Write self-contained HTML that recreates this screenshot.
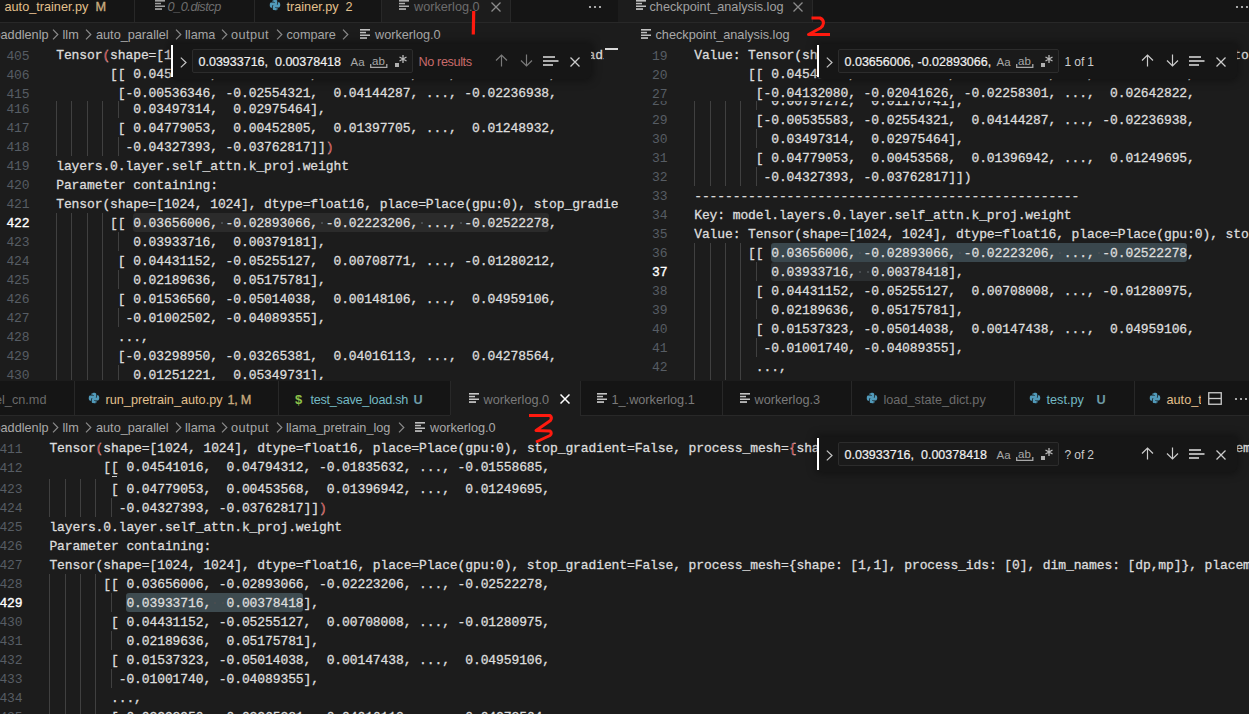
<!DOCTYPE html><html><head><meta charset="utf-8"><style>html,body{margin:0;padding:0;width:1249px;height:714px;overflow:hidden;background:#1c1c1c}.ln{position:absolute;text-align:right;width:40px;white-space:pre;font-family:'Liberation Mono',monospace;font-size:13px;letter-spacing:-0.1px;line-height:19px;color:#575d64}.tx{position:absolute;white-space:pre;font-family:'Liberation Mono',monospace;font-size:13px;letter-spacing:-0.1px;line-height:19px;color:#dcdcdc;-webkit-text-stroke:0.3px #dcdcdc}.r{color:#d21b1b}.g{position:absolute;width:1px;background:#404040}.tab{position:absolute;white-space:pre;font-family:'Liberation Sans',sans-serif;font-size:12.7px;line-height:16px}.bc{position:absolute;white-space:pre;font-family:'Liberation Sans',sans-serif;font-size:12.7px;line-height:16px;color:#a9a9a9}</style></head><body>
<div style="position:absolute;left:0px;top:-12px;width:618px;height:35px;background:#151515"></div>
<div style="position:absolute;left:0px;top:22px;width:618px;height:1px;background:#282828"></div>
<div style="position:absolute;left:381px;top:-12px;width:129px;height:34px;background:#1c1c1c"></div>
<div style="position:absolute;left:134px;top:-12px;width:1px;height:34px;background:#282828"></div>
<div style="position:absolute;left:254px;top:-12px;width:1px;height:34px;background:#282828"></div>
<div style="position:absolute;left:381px;top:-12px;width:1px;height:34px;background:#282828"></div>
<div style="position:absolute;left:510px;top:-12px;width:1px;height:34px;background:#282828"></div>
<div class="tab" style="left:4.5px;top:-1.4px;color:#e2c08d;">auto_trainer.py</div>
<div class="tab" style="left:95.5px;top:-1.4px;color:#c9ab7e;-webkit-text-stroke:0.35px #c9ab7e">M</div>
<svg style="position:absolute;left:154.5px;top:-0.5px" width="10" height="10" viewBox="0 0 10 10"><rect x="0" y="0" width="10" height="1.6" fill="#a0a0a0"/><rect x="0" y="2.8" width="6" height="1.5" fill="#a0a0a0"/><rect x="0" y="5.5" width="10" height="1.5" fill="#a0a0a0"/><rect x="0" y="8.2" width="7" height="1.7" fill="#a0a0a0"/></svg>
<div class="tab" style="left:167.5px;top:-1.4px;color:#6e6e6e;font-style:italic;letter-spacing:-0.45px">0_0.distcp</div>
<svg style="position:absolute;left:269px;top:-1px" width="12" height="12" viewBox="0 0 16 16"><path fill="#519aba" d="M7.9 1C4.6 1 4.7 2.5 4.7 2.5V4.1h3.3v.6H3.2S1 4.4 1 8s1.9 3.6 1.9 3.6h1.2V9.9s-.1-1.9 1.9-1.9h3.2s1.8 0 1.8-1.8V2.9S11.3 1 7.9 1zM6.1 2.1a.6.6 0 110 1.2.6.6 0 010-1.2z"/><path fill="#519aba" d="M8.1 15c3.3 0 3.2-1.5 3.2-1.5v-1.6H8v-.6h4.8S15 11.6 15 8s-1.9-3.6-1.9-3.6h-1.2v1.7s.1 1.9-1.9 1.9H6.8S5 8 5 9.8v3.3S4.7 15 8.1 15zm1.8-1.1a.6.6 0 110-1.2.6.6 0 010 1.2z"/></svg>
<div class="tab" style="left:286.5px;top:-1.4px;color:#e2c08d;">trainer.py</div>
<div class="tab" style="left:345.5px;top:-1.4px;color:#e2c08d;">2</div>
<svg style="position:absolute;left:399px;top:-0.5px" width="10" height="10" viewBox="0 0 10 10"><rect x="0" y="0" width="10" height="1.6" fill="#b0b0b0"/><rect x="0" y="2.8" width="6" height="1.5" fill="#b0b0b0"/><rect x="0" y="5.5" width="10" height="1.5" fill="#b0b0b0"/><rect x="0" y="8.2" width="7" height="1.7" fill="#b0b0b0"/></svg>
<div class="tab" style="left:414px;top:-1.4px;color:#6c6c6c;">workerlog.0</div>
<svg style="position:absolute;left:491px;top:2px" width="10" height="10" viewBox="0 0 10 10"><path d="M0.5 0.5L9.5 9.5M9.5 0.5L0.5 9.5" stroke="#8b8b8b" stroke-width="1.3" fill="none"/></svg>
<svg style="position:absolute;left:588px;top:5px" width="14" height="4" viewBox="0 0 14 4"><circle cx="2" cy="2" r="1.1" fill="#cccccc"/><circle cx="7" cy="2" r="1.1" fill="#cccccc"/><circle cx="12" cy="2" r="1.1" fill="#cccccc"/></svg>
<div style="position:absolute;left:618px;top:-12px;width:631px;height:35px;background:#151515"></div>
<div style="position:absolute;left:618px;top:22px;width:631px;height:1px;background:#282828"></div>
<div style="position:absolute;left:618px;top:-12px;width:194px;height:34px;background:#1c1c1c"></div>
<div style="position:absolute;left:812px;top:-12px;width:1px;height:34px;background:#282828"></div>
<svg style="position:absolute;left:635.5px;top:-0.5px" width="10" height="10" viewBox="0 0 10 10"><rect x="0" y="0" width="10" height="1.6" fill="#c0c0c0"/><rect x="0" y="2.8" width="6" height="1.5" fill="#c0c0c0"/><rect x="0" y="5.5" width="10" height="1.5" fill="#c0c0c0"/><rect x="0" y="8.2" width="7" height="1.7" fill="#c0c0c0"/></svg>
<div class="tab" style="left:649.5px;top:-1.4px;color:#a0a0a0;">checkpoint_analysis.log</div>
<svg style="position:absolute;left:793px;top:2px" width="10" height="10" viewBox="0 0 10 10"><path d="M0.5 0.5L9.5 9.5M9.5 0.5L0.5 9.5" stroke="#8b8b8b" stroke-width="1.3" fill="none"/></svg>
<svg style="position:absolute;left:1235px;top:5px" width="14" height="4" viewBox="0 0 14 4"><circle cx="2" cy="2" r="1.1" fill="#cccccc"/><circle cx="7" cy="2" r="1.1" fill="#cccccc"/><circle cx="12" cy="2" r="1.1" fill="#cccccc"/></svg>
<div style="position:absolute;left:0px;top:381px;width:1249px;height:35px;background:#151515"></div>
<div style="position:absolute;left:0px;top:415px;width:1249px;height:1px;background:#282828"></div>
<div style="position:absolute;left:450px;top:381px;width:130px;height:35px;background:#1c1c1c"></div>
<div style="position:absolute;left:74px;top:381px;width:1px;height:34px;background:#282828"></div>
<div style="position:absolute;left:278px;top:381px;width:1px;height:34px;background:#282828"></div>
<div style="position:absolute;left:450px;top:381px;width:1px;height:34px;background:#282828"></div>
<div style="position:absolute;left:580px;top:381px;width:1px;height:34px;background:#282828"></div>
<div style="position:absolute;left:722px;top:381px;width:1px;height:34px;background:#282828"></div>
<div style="position:absolute;left:851px;top:381px;width:1px;height:34px;background:#282828"></div>
<div style="position:absolute;left:1014px;top:381px;width:1px;height:34px;background:#282828"></div>
<div style="position:absolute;left:1134px;top:381px;width:1px;height:34px;background:#282828"></div>
<div class="tab" style="left:-5px;top:391.6px;color:#6a6a6a;">el_cn.md</div>
<svg style="position:absolute;left:88px;top:392px" width="12" height="12" viewBox="0 0 16 16"><path fill="#519aba" d="M7.9 1C4.6 1 4.7 2.5 4.7 2.5V4.1h3.3v.6H3.2S1 4.4 1 8s1.9 3.6 1.9 3.6h1.2V9.9s-.1-1.9 1.9-1.9h3.2s1.8 0 1.8-1.8V2.9S11.3 1 7.9 1zM6.1 2.1a.6.6 0 110 1.2.6.6 0 010-1.2z"/><path fill="#519aba" d="M8.1 15c3.3 0 3.2-1.5 3.2-1.5v-1.6H8v-.6h4.8S15 11.6 15 8s-1.9-3.6-1.9-3.6h-1.2v1.7s.1 1.9-1.9 1.9H6.8S5 8 5 9.8v3.3S4.7 15 8.1 15zm1.8-1.1a.6.6 0 110-1.2.6.6 0 010 1.2z"/></svg>
<div class="tab" style="left:105.5px;top:391.6px;color:#e2c08d;">run_pretrain_auto.py</div>
<div class="tab" style="left:227.5px;top:391.6px;color:#c9ab7e;font-size:12.7px;letter-spacing:-0.3px;-webkit-text-stroke:0.3px #c9ab7e">1, M</div>
<div class="tab" style="left:295px;top:391.6px;color:#8dc149;font-weight:bold;font-size:13px">$</div>
<div class="tab" style="left:310.5px;top:391.6px;color:#73b9c4;letter-spacing:-0.28px">test_save_load.sh</div>
<div class="tab" style="left:413.5px;top:391.6px;color:#6e9aa6;font-weight:bold">U</div>
<svg style="position:absolute;left:469px;top:393px" width="10" height="10" viewBox="0 0 10 10"><rect x="0" y="0" width="10" height="1.6" fill="#c8c8c8"/><rect x="0" y="2.8" width="6" height="1.5" fill="#c8c8c8"/><rect x="0" y="5.5" width="10" height="1.5" fill="#c8c8c8"/><rect x="0" y="8.2" width="7" height="1.7" fill="#c8c8c8"/></svg>
<div class="tab" style="left:483.5px;top:391.6px;color:#7a7a7a;">workerlog.0</div>
<svg style="position:absolute;left:560px;top:394px" width="10" height="10" viewBox="0 0 10 10"><path d="M0.5 0.5L9.5 9.5M9.5 0.5L0.5 9.5" stroke="#ffffff" stroke-width="1.5" fill="none"/></svg>
<svg style="position:absolute;left:597px;top:393px" width="10" height="10" viewBox="0 0 10 10"><rect x="0" y="0" width="10" height="1.6" fill="#c5c5c5"/><rect x="0" y="2.8" width="6" height="1.5" fill="#c5c5c5"/><rect x="0" y="5.5" width="10" height="1.5" fill="#c5c5c5"/><rect x="0" y="8.2" width="7" height="1.7" fill="#c5c5c5"/></svg>
<div class="tab" style="left:611.5px;top:391.6px;color:#7a7a7a;">1_.workerlog.1</div>
<svg style="position:absolute;left:740px;top:393px" width="10" height="10" viewBox="0 0 10 10"><rect x="0" y="0" width="10" height="1.6" fill="#c5c5c5"/><rect x="0" y="2.8" width="6" height="1.5" fill="#c5c5c5"/><rect x="0" y="5.5" width="10" height="1.5" fill="#c5c5c5"/><rect x="0" y="8.2" width="7" height="1.7" fill="#c5c5c5"/></svg>
<div class="tab" style="left:754.5px;top:391.6px;color:#7a7a7a;">workerlog.3</div>
<svg style="position:absolute;left:866px;top:392px" width="12" height="12" viewBox="0 0 16 16"><path fill="#519aba" d="M7.9 1C4.6 1 4.7 2.5 4.7 2.5V4.1h3.3v.6H3.2S1 4.4 1 8s1.9 3.6 1.9 3.6h1.2V9.9s-.1-1.9 1.9-1.9h3.2s1.8 0 1.8-1.8V2.9S11.3 1 7.9 1zM6.1 2.1a.6.6 0 110 1.2.6.6 0 010-1.2z"/><path fill="#519aba" d="M8.1 15c3.3 0 3.2-1.5 3.2-1.5v-1.6H8v-.6h4.8S15 11.6 15 8s-1.9-3.6-1.9-3.6h-1.2v1.7s.1 1.9-1.9 1.9H6.8S5 8 5 9.8v3.3S4.7 15 8.1 15zm1.8-1.1a.6.6 0 110-1.2.6.6 0 010 1.2z"/></svg>
<div class="tab" style="left:883.5px;top:391.6px;color:#6c6c6c;">load_state_dict.py</div>
<svg style="position:absolute;left:1029px;top:392px" width="12" height="12" viewBox="0 0 16 16"><path fill="#519aba" d="M7.9 1C4.6 1 4.7 2.5 4.7 2.5V4.1h3.3v.6H3.2S1 4.4 1 8s1.9 3.6 1.9 3.6h1.2V9.9s-.1-1.9 1.9-1.9h3.2s1.8 0 1.8-1.8V2.9S11.3 1 7.9 1zM6.1 2.1a.6.6 0 110 1.2.6.6 0 010-1.2z"/><path fill="#519aba" d="M8.1 15c3.3 0 3.2-1.5 3.2-1.5v-1.6H8v-.6h4.8S15 11.6 15 8s-1.9-3.6-1.9-3.6h-1.2v1.7s.1 1.9-1.9 1.9H6.8S5 8 5 9.8v3.3S4.7 15 8.1 15zm1.8-1.1a.6.6 0 110-1.2.6.6 0 010 1.2z"/></svg>
<div class="tab" style="left:1046.5px;top:391.6px;color:#73b9c4;">test.py</div>
<div class="tab" style="left:1096.5px;top:391.6px;color:#6e9aa6;font-weight:bold">U</div>
<svg style="position:absolute;left:1149px;top:392px" width="12" height="12" viewBox="0 0 16 16"><path fill="#519aba" d="M7.9 1C4.6 1 4.7 2.5 4.7 2.5V4.1h3.3v.6H3.2S1 4.4 1 8s1.9 3.6 1.9 3.6h1.2V9.9s-.1-1.9 1.9-1.9h3.2s1.8 0 1.8-1.8V2.9S11.3 1 7.9 1zM6.1 2.1a.6.6 0 110 1.2.6.6 0 010-1.2z"/><path fill="#519aba" d="M8.1 15c3.3 0 3.2-1.5 3.2-1.5v-1.6H8v-.6h4.8S15 11.6 15 8s-1.9-3.6-1.9-3.6h-1.2v1.7s.1 1.9-1.9 1.9H6.8S5 8 5 9.8v3.3S4.7 15 8.1 15zm1.8-1.1a.6.6 0 110-1.2.6.6 0 010 1.2z"/></svg>
<div style="position:absolute;left:1166px;top:385px;width:35px;height:26px;overflow:hidden">
<div class="tab" style="left:0.5px;top:6.6px;color:#e2c08d">auto_trainer.py</div></div>
<svg style="position:absolute;left:1208px;top:392px" width="14" height="13" viewBox="0 0 14 13"><rect x="0.75" y="0.75" width="12.5" height="11.5" fill="none" stroke="#cccccc" stroke-width="1.3"/><line x1="1" y1="6.5" x2="13" y2="6.5" stroke="#cccccc" stroke-width="1.3"/></svg>
<svg style="position:absolute;left:1234px;top:397px" width="14" height="4" viewBox="0 0 14 4"><circle cx="2" cy="2" r="1.1" fill="#cccccc"/><circle cx="7" cy="2" r="1.1" fill="#cccccc"/><circle cx="12" cy="2" r="1.1" fill="#cccccc"/></svg>
<div class="bc" style="left:-6.5px;top:26.6px">paddlenlp</div>
<svg style="position:absolute;left:52px;top:28.5px" width="7" height="11" viewBox="0 0 7 11"><path d="M1 0.7L5.8 5.5L1 10.3" stroke="#8b8b8b" stroke-width="1.2" fill="none"/></svg>
<div class="bc" style="left:62.5px;top:26.6px">llm</div>
<svg style="position:absolute;left:85px;top:28.5px" width="7" height="11" viewBox="0 0 7 11"><path d="M1 0.7L5.8 5.5L1 10.3" stroke="#8b8b8b" stroke-width="1.2" fill="none"/></svg>
<div class="bc" style="left:96px;top:26.6px">auto_parallel</div>
<svg style="position:absolute;left:175px;top:28.5px" width="7" height="11" viewBox="0 0 7 11"><path d="M1 0.7L5.8 5.5L1 10.3" stroke="#8b8b8b" stroke-width="1.2" fill="none"/></svg>
<div class="bc" style="left:185px;top:26.6px">llama</div>
<svg style="position:absolute;left:221px;top:28.5px" width="7" height="11" viewBox="0 0 7 11"><path d="M1 0.7L5.8 5.5L1 10.3" stroke="#8b8b8b" stroke-width="1.2" fill="none"/></svg>
<div class="bc" style="left:231px;top:26.6px;letter-spacing:0.45px">output</div>
<svg style="position:absolute;left:276px;top:28.5px" width="7" height="11" viewBox="0 0 7 11"><path d="M1 0.7L5.8 5.5L1 10.3" stroke="#8b8b8b" stroke-width="1.2" fill="none"/></svg>
<div class="bc" style="left:286.5px;top:26.6px">compare</div>
<svg style="position:absolute;left:342px;top:28.5px" width="7" height="11" viewBox="0 0 7 11"><path d="M1 0.7L5.8 5.5L1 10.3" stroke="#8b8b8b" stroke-width="1.2" fill="none"/></svg>
<svg style="position:absolute;left:360px;top:29px" width="10" height="10" viewBox="0 0 10 10"><rect x="0" y="0" width="10" height="1.6" fill="#c0c0c0"/><rect x="0" y="2.8" width="6" height="1.5" fill="#c0c0c0"/><rect x="0" y="5.5" width="10" height="1.5" fill="#c0c0c0"/><rect x="0" y="8.2" width="7" height="1.7" fill="#c0c0c0"/></svg>
<div class="bc" style="left:375px;top:26.6px">workerlog.0</div>
<svg style="position:absolute;left:641px;top:29px" width="10" height="10" viewBox="0 0 10 10"><rect x="0" y="0" width="10" height="1.6" fill="#c0c0c0"/><rect x="0" y="2.8" width="6" height="1.5" fill="#c0c0c0"/><rect x="0" y="5.5" width="10" height="1.5" fill="#c0c0c0"/><rect x="0" y="8.2" width="7" height="1.7" fill="#c0c0c0"/></svg>
<div class="bc" style="left:655.5px;top:26.6px">checkpoint_analysis.log</div>
<div class="bc" style="left:-6.5px;top:419.6px">paddlenlp</div>
<svg style="position:absolute;left:52px;top:421.5px" width="7" height="11" viewBox="0 0 7 11"><path d="M1 0.7L5.8 5.5L1 10.3" stroke="#8b8b8b" stroke-width="1.2" fill="none"/></svg>
<div class="bc" style="left:62.5px;top:419.6px">llm</div>
<svg style="position:absolute;left:85px;top:421.5px" width="7" height="11" viewBox="0 0 7 11"><path d="M1 0.7L5.8 5.5L1 10.3" stroke="#8b8b8b" stroke-width="1.2" fill="none"/></svg>
<div class="bc" style="left:96px;top:419.6px">auto_parallel</div>
<svg style="position:absolute;left:175px;top:421.5px" width="7" height="11" viewBox="0 0 7 11"><path d="M1 0.7L5.8 5.5L1 10.3" stroke="#8b8b8b" stroke-width="1.2" fill="none"/></svg>
<div class="bc" style="left:185px;top:419.6px">llama</div>
<svg style="position:absolute;left:221px;top:421.5px" width="7" height="11" viewBox="0 0 7 11"><path d="M1 0.7L5.8 5.5L1 10.3" stroke="#8b8b8b" stroke-width="1.2" fill="none"/></svg>
<div class="bc" style="left:231px;top:419.6px;letter-spacing:0.45px">output</div>
<svg style="position:absolute;left:276px;top:421.5px" width="7" height="11" viewBox="0 0 7 11"><path d="M1 0.7L5.8 5.5L1 10.3" stroke="#8b8b8b" stroke-width="1.2" fill="none"/></svg>
<div class="bc" style="left:286px;top:419.6px">llama_pretrain_log</div>
<svg style="position:absolute;left:398px;top:421.5px" width="7" height="11" viewBox="0 0 7 11"><path d="M1 0.7L5.8 5.5L1 10.3" stroke="#8b8b8b" stroke-width="1.2" fill="none"/></svg>
<svg style="position:absolute;left:415px;top:422px" width="10" height="10" viewBox="0 0 10 10"><rect x="0" y="0" width="10" height="1.6" fill="#c0c0c0"/><rect x="0" y="2.8" width="6" height="1.5" fill="#c0c0c0"/><rect x="0" y="5.5" width="10" height="1.5" fill="#c0c0c0"/><rect x="0" y="8.2" width="7" height="1.7" fill="#c0c0c0"/></svg>
<div class="bc" style="left:430px;top:419.6px">workerlog.0</div>
<div style="position:absolute;left:0px;top:44px;width:618px;height:336px;overflow:hidden">
<div style="position:absolute;left:133.2px;top:169px;width:415.8px;height:19px;background:#2b2b2b;border-radius:3px"></div>
<div style="position:absolute;left:220.9px;top:178px;width:2px;height:2px;background:#484d50"></div>
<div style="position:absolute;left:321.0px;top:178px;width:2px;height:2px;background:#484d50"></div>
<div style="position:absolute;left:421.1px;top:178px;width:2px;height:2px;background:#484d50"></div>
<div style="position:absolute;left:459.6px;top:178px;width:2px;height:2px;background:#484d50"></div>
<div class="g" style="left:56px;top:55px;height:19px"></div>
<div class="g" style="left:71px;top:55px;height:19px"></div>
<div class="g" style="left:87px;top:55px;height:19px"></div>
<div class="g" style="left:102px;top:55px;height:19px"></div>
<div class="g" style="left:118px;top:55px;height:19px"></div>
<div class="g" style="left:56px;top:74px;height:19px"></div>
<div class="g" style="left:71px;top:74px;height:19px"></div>
<div class="g" style="left:87px;top:74px;height:19px"></div>
<div class="g" style="left:102px;top:74px;height:19px"></div>
<div class="g" style="left:56px;top:93px;height:19px"></div>
<div class="g" style="left:71px;top:93px;height:19px"></div>
<div class="g" style="left:87px;top:93px;height:19px"></div>
<div class="g" style="left:102px;top:93px;height:19px"></div>
<div class="g" style="left:118px;top:93px;height:19px"></div>
<div class="g" style="left:56px;top:169px;height:19px"></div>
<div class="g" style="left:71px;top:169px;height:19px"></div>
<div class="g" style="left:87px;top:169px;height:19px"></div>
<div class="g" style="left:102px;top:169px;height:19px"></div>
<div class="g" style="left:56px;top:188px;height:19px"></div>
<div class="g" style="left:71px;top:188px;height:19px"></div>
<div class="g" style="left:87px;top:188px;height:19px"></div>
<div class="g" style="left:102px;top:188px;height:19px"></div>
<div class="g" style="left:118px;top:188px;height:19px"></div>
<div class="g" style="left:56px;top:207px;height:19px"></div>
<div class="g" style="left:71px;top:207px;height:19px"></div>
<div class="g" style="left:87px;top:207px;height:19px"></div>
<div class="g" style="left:102px;top:207px;height:19px"></div>
<div class="g" style="left:56px;top:226px;height:19px"></div>
<div class="g" style="left:71px;top:226px;height:19px"></div>
<div class="g" style="left:87px;top:226px;height:19px"></div>
<div class="g" style="left:102px;top:226px;height:19px"></div>
<div class="g" style="left:118px;top:226px;height:19px"></div>
<div class="g" style="left:56px;top:245px;height:19px"></div>
<div class="g" style="left:71px;top:245px;height:19px"></div>
<div class="g" style="left:87px;top:245px;height:19px"></div>
<div class="g" style="left:102px;top:245px;height:19px"></div>
<div class="g" style="left:56px;top:264px;height:19px"></div>
<div class="g" style="left:71px;top:264px;height:19px"></div>
<div class="g" style="left:87px;top:264px;height:19px"></div>
<div class="g" style="left:102px;top:264px;height:19px"></div>
<div class="g" style="left:118px;top:264px;height:19px"></div>
<div class="g" style="left:56px;top:283px;height:19px"></div>
<div class="g" style="left:71px;top:283px;height:19px"></div>
<div class="g" style="left:87px;top:283px;height:19px"></div>
<div class="g" style="left:102px;top:283px;height:19px"></div>
<div class="g" style="left:56px;top:302px;height:19px"></div>
<div class="g" style="left:71px;top:302px;height:19px"></div>
<div class="g" style="left:87px;top:302px;height:19px"></div>
<div class="g" style="left:102px;top:302px;height:19px"></div>
<div class="g" style="left:56px;top:321px;height:19px"></div>
<div class="g" style="left:71px;top:321px;height:19px"></div>
<div class="g" style="left:87px;top:321px;height:19px"></div>
<div class="g" style="left:102px;top:321px;height:19px"></div>
<div class="g" style="left:118px;top:321px;height:19px"></div>
<div class="g" style="left:56px;top:340px;height:19px"></div>
<div class="g" style="left:71px;top:340px;height:19px"></div>
<div class="g" style="left:87px;top:340px;height:19px"></div>
<div class="g" style="left:102px;top:340px;height:19px"></div>
<div class="ln" style="left:-10.5px;top:56px;color:#575d64">416</div>
<div class="tx" style="left:56.2px;top:56px">          0.03497314,  0.02975464],</div>
<div class="ln" style="left:-10.5px;top:75px;color:#575d64">417</div>
<div class="tx" style="left:56.2px;top:75px">        [ 0.04779053,  0.00452805,  0.01397705, ...,  0.01248932,</div>
<div class="ln" style="left:-10.5px;top:94px;color:#575d64">418</div>
<div class="tx" style="left:56.2px;top:94px">         -0.04327393, -0.03762817]]<span class="r">)</span></div>
<div class="ln" style="left:-10.5px;top:113px;color:#575d64">419</div>
<div class="tx" style="left:56.2px;top:113px">layers.0.layer.self_attn.k_proj.weight</div>
<div class="ln" style="left:-10.5px;top:132px;color:#575d64">420</div>
<div class="tx" style="left:56.2px;top:132px">Parameter containing:</div>
<div class="ln" style="left:-10.5px;top:151px;color:#575d64">421</div>
<div class="tx" style="left:56.2px;top:151px">Tensor(shape=[1024, 1024], dtype=float16, place=Place(gpu:0), stop_gradient=False, process_mesh={shape: [1,1]</div>
<div class="ln" style="left:-10.5px;top:170px;color:#ffffff;-webkit-text-stroke:0.35px #ffffff">422</div>
<div class="tx" style="left:56.2px;top:170px">       [[ 0.03656006, -0.02893066, -0.02223206, ..., -0.02522278,</div>
<div class="ln" style="left:-10.5px;top:189px;color:#575d64">423</div>
<div class="tx" style="left:56.2px;top:189px">          0.03933716,  0.00379181],</div>
<div class="ln" style="left:-10.5px;top:208px;color:#575d64">424</div>
<div class="tx" style="left:56.2px;top:208px">        [ 0.04431152, -0.05255127,  0.00708771, ..., -0.01280212,</div>
<div class="ln" style="left:-10.5px;top:227px;color:#575d64">425</div>
<div class="tx" style="left:56.2px;top:227px">          0.02189636,  0.05175781],</div>
<div class="ln" style="left:-10.5px;top:246px;color:#575d64">426</div>
<div class="tx" style="left:56.2px;top:246px">        [ 0.01536560, -0.05014038,  0.00148106, ...,  0.04959106,</div>
<div class="ln" style="left:-10.5px;top:265px;color:#575d64">427</div>
<div class="tx" style="left:56.2px;top:265px">         -0.01002502, -0.04089355],</div>
<div class="ln" style="left:-10.5px;top:284px;color:#575d64">428</div>
<div class="tx" style="left:56.2px;top:284px">        ...,</div>
<div class="ln" style="left:-10.5px;top:303px;color:#575d64">429</div>
<div class="tx" style="left:56.2px;top:303px">        [-0.03298950, -0.03265381,  0.04016113, ...,  0.04278564,</div>
<div class="ln" style="left:-10.5px;top:322px;color:#575d64">430</div>
<div class="tx" style="left:56.2px;top:322px">          0.01251221,  0.05349731],</div>
<div class="ln" style="left:-10.5px;top:341px;color:#575d64">431</div>
<div class="tx" style="left:56.2px;top:341px">        [ 0.02435303, -0.00198364,  0.03720093, ...,  0.01556396,</div>
<div style="position:absolute;left:0;top:0;width:604px;height:57px;background:#1c1c1c;overflow:hidden">
<div class="ln" style="left:-10.5px;top:3px">405</div>
<div class="tx" style="left:56.2px;top:2px">Tensor<span class="r">(</span>shape=[1024, 1024], dtype=float16, place=Place(gpu:0), stop_gradient=False, process_mesh={shape: [1,1]</div>
<div class="ln" style="left:-10.5px;top:22px">406</div>
<div class="tx" style="left:56.2px;top:21px">       [[ 0.04541016,  0.04794312, -0.01835632, ..., -0.01558685,</div>
<div class="ln" style="left:-10.5px;top:41px">415</div>
<div class="tx" style="left:56.2px;top:40px">        [-0.00536346, -0.02554321,  0.04144287, ..., -0.02236938,</div>
</div>
</div>
<div style="position:absolute;left:618px;top:44px;width:631px;height:336px;overflow:hidden">
<div style="position:absolute;left:153.2px;top:199px;width:415.8px;height:19px;background:#3a474d;border-radius:3px"></div>
<div style="position:absolute;left:240.9px;top:208px;width:2px;height:2px;background:#484d50"></div>
<div style="position:absolute;left:341.0px;top:208px;width:2px;height:2px;background:#484d50"></div>
<div style="position:absolute;left:441.1px;top:208px;width:2px;height:2px;background:#484d50"></div>
<div style="position:absolute;left:479.6px;top:208px;width:2px;height:2px;background:#484d50"></div>
<div style="position:absolute;left:153.2px;top:218px;width:177.1px;height:19px;background:#2b2e30;border-radius:3px"></div>
<div style="position:absolute;left:240.9px;top:227px;width:2px;height:2px;background:#484d50"></div>
<div style="position:absolute;left:248.6px;top:227px;width:2px;height:2px;background:#484d50"></div>
<div class="g" style="left:76px;top:47px;height:19px"></div>
<div class="g" style="left:92px;top:47px;height:19px"></div>
<div class="g" style="left:107px;top:47px;height:19px"></div>
<div class="g" style="left:122px;top:47px;height:19px"></div>
<div class="g" style="left:138px;top:47px;height:19px"></div>
<div class="g" style="left:76px;top:66px;height:19px"></div>
<div class="g" style="left:92px;top:66px;height:19px"></div>
<div class="g" style="left:107px;top:66px;height:19px"></div>
<div class="g" style="left:122px;top:66px;height:19px"></div>
<div class="g" style="left:76px;top:85px;height:19px"></div>
<div class="g" style="left:92px;top:85px;height:19px"></div>
<div class="g" style="left:107px;top:85px;height:19px"></div>
<div class="g" style="left:122px;top:85px;height:19px"></div>
<div class="g" style="left:138px;top:85px;height:19px"></div>
<div class="g" style="left:76px;top:104px;height:19px"></div>
<div class="g" style="left:92px;top:104px;height:19px"></div>
<div class="g" style="left:107px;top:104px;height:19px"></div>
<div class="g" style="left:122px;top:104px;height:19px"></div>
<div class="g" style="left:76px;top:123px;height:19px"></div>
<div class="g" style="left:92px;top:123px;height:19px"></div>
<div class="g" style="left:107px;top:123px;height:19px"></div>
<div class="g" style="left:122px;top:123px;height:19px"></div>
<div class="g" style="left:138px;top:123px;height:19px"></div>
<div class="g" style="left:76px;top:199px;height:19px"></div>
<div class="g" style="left:92px;top:199px;height:19px"></div>
<div class="g" style="left:107px;top:199px;height:19px"></div>
<div class="g" style="left:122px;top:199px;height:19px"></div>
<div class="g" style="left:76px;top:218px;height:19px"></div>
<div class="g" style="left:92px;top:218px;height:19px"></div>
<div class="g" style="left:107px;top:218px;height:19px"></div>
<div class="g" style="left:122px;top:218px;height:19px"></div>
<div class="g" style="left:138px;top:218px;height:19px"></div>
<div class="g" style="left:76px;top:237px;height:19px"></div>
<div class="g" style="left:92px;top:237px;height:19px"></div>
<div class="g" style="left:107px;top:237px;height:19px"></div>
<div class="g" style="left:122px;top:237px;height:19px"></div>
<div class="g" style="left:76px;top:256px;height:19px"></div>
<div class="g" style="left:92px;top:256px;height:19px"></div>
<div class="g" style="left:107px;top:256px;height:19px"></div>
<div class="g" style="left:122px;top:256px;height:19px"></div>
<div class="g" style="left:138px;top:256px;height:19px"></div>
<div class="g" style="left:76px;top:275px;height:19px"></div>
<div class="g" style="left:92px;top:275px;height:19px"></div>
<div class="g" style="left:107px;top:275px;height:19px"></div>
<div class="g" style="left:122px;top:275px;height:19px"></div>
<div class="g" style="left:76px;top:294px;height:19px"></div>
<div class="g" style="left:92px;top:294px;height:19px"></div>
<div class="g" style="left:107px;top:294px;height:19px"></div>
<div class="g" style="left:122px;top:294px;height:19px"></div>
<div class="g" style="left:138px;top:294px;height:19px"></div>
<div class="g" style="left:76px;top:313px;height:19px"></div>
<div class="g" style="left:92px;top:313px;height:19px"></div>
<div class="g" style="left:107px;top:313px;height:19px"></div>
<div class="g" style="left:122px;top:313px;height:19px"></div>
<div class="g" style="left:76px;top:332px;height:19px"></div>
<div class="g" style="left:92px;top:332px;height:19px"></div>
<div class="g" style="left:107px;top:332px;height:19px"></div>
<div class="g" style="left:122px;top:332px;height:19px"></div>
<div class="ln" style="left:9.5px;top:48px;color:#575d64">28</div>
<div class="tx" style="left:76.20000000000005px;top:48px">          0.00797272,  0.01176741],</div>
<div class="ln" style="left:9.5px;top:67px;color:#575d64">29</div>
<div class="tx" style="left:76.20000000000005px;top:67px">        [-0.00535583, -0.02554321,  0.04144287, ..., -0.02236938,</div>
<div class="ln" style="left:9.5px;top:86px;color:#575d64">30</div>
<div class="tx" style="left:76.20000000000005px;top:86px">          0.03497314,  0.02975464],</div>
<div class="ln" style="left:9.5px;top:105px;color:#575d64">31</div>
<div class="tx" style="left:76.20000000000005px;top:105px">        [ 0.04779053,  0.00453568,  0.01396942, ...,  0.01249695,</div>
<div class="ln" style="left:9.5px;top:124px;color:#575d64">32</div>
<div class="tx" style="left:76.20000000000005px;top:124px">         -0.04327393, -0.03762817]])</div>
<div class="ln" style="left:9.5px;top:143px;color:#575d64">33</div>
<div class="tx" style="left:76.20000000000005px;top:143px">--------------------------------------------------</div>
<div class="ln" style="left:9.5px;top:162px;color:#575d64">34</div>
<div class="tx" style="left:76.20000000000005px;top:162px">Key: model.layers.0.layer.self_attn.k_proj.weight</div>
<div class="ln" style="left:9.5px;top:181px;color:#575d64">35</div>
<div class="tx" style="left:76.20000000000005px;top:181px">Value: Tensor(shape=[1024, 1024], dtype=float16, place=Place(gpu:0), stop_gradient=False, process_mesh={shape: [1,1]</div>
<div class="ln" style="left:9.5px;top:200px;color:#575d64">36</div>
<div class="tx" style="left:76.20000000000005px;top:200px">       [[ 0.03656006, -0.02893066, -0.02223206, ..., -0.02522278,</div>
<div class="ln" style="left:9.5px;top:219px;color:#ffffff;-webkit-text-stroke:0.35px #ffffff">37</div>
<div class="tx" style="left:76.20000000000005px;top:219px">          0.03933716,  0.00378418],</div>
<div class="ln" style="left:9.5px;top:238px;color:#575d64">38</div>
<div class="tx" style="left:76.20000000000005px;top:238px">        [ 0.04431152, -0.05255127,  0.00708008, ..., -0.01280975,</div>
<div class="ln" style="left:9.5px;top:257px;color:#575d64">39</div>
<div class="tx" style="left:76.20000000000005px;top:257px">          0.02189636,  0.05175781],</div>
<div class="ln" style="left:9.5px;top:276px;color:#575d64">40</div>
<div class="tx" style="left:76.20000000000005px;top:276px">        [ 0.01537323, -0.05014038,  0.00147438, ...,  0.04959106,</div>
<div class="ln" style="left:9.5px;top:295px;color:#575d64">41</div>
<div class="tx" style="left:76.20000000000005px;top:295px">         -0.01001740, -0.04089355],</div>
<div class="ln" style="left:9.5px;top:314px;color:#575d64">42</div>
<div class="tx" style="left:76.20000000000005px;top:314px">        ...,</div>
<div class="ln" style="left:9.5px;top:333px;color:#575d64">43</div>
<div class="tx" style="left:76.20000000000005px;top:333px">        [-0.03298950, -0.03265381,  0.04016113, ...,  0.04278564,</div>
<div style="position:absolute;left:0;top:0;width:631px;height:57px;background:#1c1c1c;overflow:hidden">
<div class="ln" style="left:9.5px;top:3px">19</div>
<div class="tx" style="left:76.20000000000005px;top:2px">Value: Tensor(shape=[1024, 1024], dtype=float16, place=Place(gpu:0), stop_gradient=False, process_mesh={shape: [1,1]</div>
<div class="ln" style="left:9.5px;top:22px">20</div>
<div class="tx" style="left:76.20000000000005px;top:21px">       [[ 0.04541016,  0.04794312, -0.01835632, ..., -0.01558685,</div>
<div class="ln" style="left:9.5px;top:41px">27</div>
<div class="tx" style="left:76.20000000000005px;top:40px">        [-0.04132080, -0.02041626, -0.02258301, ...,  0.02642822,</div>
</div>
</div>
<div style="position:absolute;left:112px;top:476px;width:5px;height:1px;background:#cccccc;z-index:5"></div>
<div style="position:absolute;left:0px;top:437px;width:1249px;height:277px;overflow:hidden">
<div style="position:absolute;left:126.4px;top:156px;width:177.1px;height:19px;background:#3e4b50;border-radius:3px"></div>
<div style="position:absolute;left:214.1px;top:165px;width:2px;height:2px;background:#484d50"></div>
<div style="position:absolute;left:221.8px;top:165px;width:2px;height:2px;background:#484d50"></div>
<div class="g" style="left:49px;top:42px;height:19px"></div>
<div class="g" style="left:65px;top:42px;height:19px"></div>
<div class="g" style="left:80px;top:42px;height:19px"></div>
<div class="g" style="left:95px;top:42px;height:19px"></div>
<div class="g" style="left:49px;top:61px;height:19px"></div>
<div class="g" style="left:65px;top:61px;height:19px"></div>
<div class="g" style="left:80px;top:61px;height:19px"></div>
<div class="g" style="left:95px;top:61px;height:19px"></div>
<div class="g" style="left:111px;top:61px;height:19px"></div>
<div class="g" style="left:49px;top:137px;height:19px"></div>
<div class="g" style="left:65px;top:137px;height:19px"></div>
<div class="g" style="left:80px;top:137px;height:19px"></div>
<div class="g" style="left:95px;top:137px;height:19px"></div>
<div class="g" style="left:49px;top:156px;height:19px"></div>
<div class="g" style="left:65px;top:156px;height:19px"></div>
<div class="g" style="left:80px;top:156px;height:19px"></div>
<div class="g" style="left:95px;top:156px;height:19px"></div>
<div class="g" style="left:111px;top:156px;height:19px"></div>
<div class="g" style="left:49px;top:175px;height:19px"></div>
<div class="g" style="left:65px;top:175px;height:19px"></div>
<div class="g" style="left:80px;top:175px;height:19px"></div>
<div class="g" style="left:95px;top:175px;height:19px"></div>
<div class="g" style="left:49px;top:194px;height:19px"></div>
<div class="g" style="left:65px;top:194px;height:19px"></div>
<div class="g" style="left:80px;top:194px;height:19px"></div>
<div class="g" style="left:95px;top:194px;height:19px"></div>
<div class="g" style="left:111px;top:194px;height:19px"></div>
<div class="g" style="left:49px;top:213px;height:19px"></div>
<div class="g" style="left:65px;top:213px;height:19px"></div>
<div class="g" style="left:80px;top:213px;height:19px"></div>
<div class="g" style="left:95px;top:213px;height:19px"></div>
<div class="g" style="left:49px;top:232px;height:19px"></div>
<div class="g" style="left:65px;top:232px;height:19px"></div>
<div class="g" style="left:80px;top:232px;height:19px"></div>
<div class="g" style="left:95px;top:232px;height:19px"></div>
<div class="g" style="left:111px;top:232px;height:19px"></div>
<div class="g" style="left:49px;top:251px;height:19px"></div>
<div class="g" style="left:65px;top:251px;height:19px"></div>
<div class="g" style="left:80px;top:251px;height:19px"></div>
<div class="g" style="left:95px;top:251px;height:19px"></div>
<div class="g" style="left:49px;top:270px;height:19px"></div>
<div class="g" style="left:65px;top:270px;height:19px"></div>
<div class="g" style="left:80px;top:270px;height:19px"></div>
<div class="g" style="left:95px;top:270px;height:19px"></div>
<div class="ln" style="left:-17.5px;top:43px;color:#575d64">423</div>
<div class="tx" style="left:49.4px;top:43px">        [ 0.04779053,  0.00453568,  0.01396942, ...,  0.01249695,</div>
<div class="ln" style="left:-17.5px;top:62px;color:#575d64">424</div>
<div class="tx" style="left:49.4px;top:62px">         -0.04327393, -0.03762817]]<span class="r">)</span></div>
<div class="ln" style="left:-17.5px;top:81px;color:#575d64">425</div>
<div class="tx" style="left:49.4px;top:81px">layers.0.layer.self_attn.k_proj.weight</div>
<div class="ln" style="left:-17.5px;top:100px;color:#575d64">426</div>
<div class="tx" style="left:49.4px;top:100px">Parameter containing:</div>
<div class="ln" style="left:-17.5px;top:119px;color:#575d64">427</div>
<div class="tx" style="left:49.4px;top:119px">Tensor(shape=[1024, 1024], dtype=float16, place=Place(gpu:0), stop_gradient=False, process_mesh={shape: [1,1], process_ids: [0], dim_names: [dp,mp]}, placements</div>
<div class="ln" style="left:-17.5px;top:138px;color:#575d64">428</div>
<div class="tx" style="left:49.4px;top:138px">       [[ 0.03656006, -0.02893066, -0.02223206, ..., -0.02522278,</div>
<div class="ln" style="left:-17.5px;top:157px;color:#ffffff;-webkit-text-stroke:0.35px #ffffff">429</div>
<div class="tx" style="left:49.4px;top:157px">          0.03933716,  0.00378418],</div>
<div class="ln" style="left:-17.5px;top:176px;color:#575d64">430</div>
<div class="tx" style="left:49.4px;top:176px">        [ 0.04431152, -0.05255127,  0.00708008, ..., -0.01280975,</div>
<div class="ln" style="left:-17.5px;top:195px;color:#575d64">431</div>
<div class="tx" style="left:49.4px;top:195px">          0.02189636,  0.05175781],</div>
<div class="ln" style="left:-17.5px;top:214px;color:#575d64">432</div>
<div class="tx" style="left:49.4px;top:214px">        [ 0.01537323, -0.05014038,  0.00147438, ...,  0.04959106,</div>
<div class="ln" style="left:-17.5px;top:233px;color:#575d64">433</div>
<div class="tx" style="left:49.4px;top:233px">         -0.01001740, -0.04089355],</div>
<div class="ln" style="left:-17.5px;top:252px;color:#575d64">434</div>
<div class="tx" style="left:49.4px;top:252px">        ...,</div>
<div class="ln" style="left:-17.5px;top:271px;color:#575d64">435</div>
<div class="tx" style="left:49.4px;top:271px">        [-0.03298950, -0.03265381,  0.04016113, ...,  0.04278564,</div>
<div style="position:absolute;left:0;top:0;width:1249px;height:38px;background:#1c1c1c;overflow:hidden">
<div class="ln" style="left:-17.5px;top:3px">411</div>
<div class="tx" style="left:49.4px;top:2px">Tensor<span class="r">(</span>shape=[1024, 1024], dtype=float16, place=Place(gpu:0), stop_gradient=False, process_mesh=<span class="r">{</span>shape: [1,1], process_ids: [0], dim_names: [dp,mp]}, placements</div>
<div class="ln" style="left:-17.5px;top:22px">412</div>
<div class="tx" style="left:49.4px;top:21px">       [[ 0.04541016,  0.04794312, -0.01835632, ..., -0.01558685,</div>
</div>
</div>
<div style="position:absolute;left:171px;top:44px;width:420px;height:35px;background:#161616;border-radius:0 0 5px 5px;box-shadow:0 0 8px 2px rgba(0,0,0,0.36)"></div>
<div style="position:absolute;left:171px;top:45px;width:2px;height:32px;background:#ffffff"></div>
<svg style="position:absolute;left:180px;top:57px" width="7" height="11" viewBox="0 0 7 11"><path d="M0.8 0.6L6 5.5L0.8 10.4" stroke="#c5c5c5" stroke-width="1.2" fill="none"/></svg>
<div style="position:absolute;left:192px;top:49px;width:221px;height:24px;box-sizing:border-box;background:#1a1a1a;border:1px solid #2c2c2c;border-radius:2px"></div>
<div class="tab" style="left:198.5px;top:53.5px;color:#f0f0f0;font-size:12.5px;-webkit-text-stroke:0.2px #f0f0f0">0.03933716,  0.00378418</div>
<div class="tab" style="left:350.5px;top:54px;color:#a8a8a8;font-size:11.5px">Aa</div>
<div class="tab" style="left:372px;top:53px;color:#a8a8a8;font-size:11.5px">ab</div>
<svg style="position:absolute;left:370px;top:64px" width="18" height="4" viewBox="0 0 18 4"><path d="M0.7 0V3.3H16.8V0" stroke="#a8a8a8" stroke-width="1.3" fill="none"/></svg>
<div style="position:absolute;left:394.5px;top:63px;width:4px;height:4px;background:#b0b0b0"></div>
<svg style="position:absolute;left:399px;top:55px" width="8" height="8" viewBox="0 0 8 8"><path d="M4 0V8M0.5 2L7.5 6M7.5 2L0.5 6" stroke="#b8b8b8" stroke-width="1.3" fill="none"/></svg>
<div class="tab" style="left:418.5px;top:53.5px;color:#c86a6a;font-size:12.7px;letter-spacing:-0.39px">No results</div>
<svg style="position:absolute;left:495px;top:54px" width="13" height="13" viewBox="0 0 13 13"><path d="M6.5 12.5V1M1 6.5L6.5 1L12 6.5" stroke="#7a7a7a" stroke-width="1.2" fill="none"/></svg>
<svg style="position:absolute;left:520px;top:54px" width="13" height="13" viewBox="0 0 13 13"><path d="M6.5 0.5V12M1 6.5L6.5 12L12 6.5" stroke="#7a7a7a" stroke-width="1.2" fill="none"/></svg>
<svg style="position:absolute;left:543px;top:56px" width="16" height="10" viewBox="0 0 16 10"><path d="M0 1H12M0 5H15.5M0 9H10" stroke="#e0e0e0" stroke-width="1.3" fill="none"/></svg>
<svg style="position:absolute;left:570px;top:56.5px" width="10" height="10" viewBox="0 0 10 10"><path d="M0.5 0.5L9.5 9.5M9.5 0.5L0.5 9.5" stroke="#cccccc" stroke-width="1.3" fill="none"/></svg>
<div style="position:absolute;left:817px;top:44px;width:420px;height:35px;background:#161616;border-radius:0 0 5px 5px;box-shadow:0 0 8px 2px rgba(0,0,0,0.36)"></div>
<div style="position:absolute;left:817px;top:45px;width:2px;height:32px;background:#ffffff"></div>
<svg style="position:absolute;left:826px;top:57px" width="7" height="11" viewBox="0 0 7 11"><path d="M0.8 0.6L6 5.5L0.8 10.4" stroke="#c5c5c5" stroke-width="1.2" fill="none"/></svg>
<div style="position:absolute;left:838px;top:49px;width:221px;height:24px;box-sizing:border-box;background:#1a1a1a;border:1px solid #2c2c2c;border-radius:2px"></div>
<div class="tab" style="left:844.5px;top:53.5px;color:#f0f0f0;font-size:12.5px;-webkit-text-stroke:0.2px #f0f0f0">0.03656006, -0.02893066,</div>
<div class="tab" style="left:996.5px;top:54px;color:#a8a8a8;font-size:11.5px">Aa</div>
<div class="tab" style="left:1018px;top:53px;color:#a8a8a8;font-size:11.5px">ab</div>
<svg style="position:absolute;left:1016px;top:64px" width="18" height="4" viewBox="0 0 18 4"><path d="M0.7 0V3.3H16.8V0" stroke="#a8a8a8" stroke-width="1.3" fill="none"/></svg>
<div style="position:absolute;left:1040.5px;top:63px;width:4px;height:4px;background:#b0b0b0"></div>
<svg style="position:absolute;left:1045px;top:55px" width="8" height="8" viewBox="0 0 8 8"><path d="M4 0V8M0.5 2L7.5 6M7.5 2L0.5 6" stroke="#b8b8b8" stroke-width="1.3" fill="none"/></svg>
<div class="tab" style="left:1064.5px;top:53.5px;color:#cccccc;font-size:12px;letter-spacing:-0.1px">1 of 1</div>
<svg style="position:absolute;left:1141px;top:54px" width="13" height="13" viewBox="0 0 13 13"><path d="M6.5 12.5V1M1 6.5L6.5 1L12 6.5" stroke="#cccccc" stroke-width="1.2" fill="none"/></svg>
<svg style="position:absolute;left:1166px;top:54px" width="13" height="13" viewBox="0 0 13 13"><path d="M6.5 0.5V12M1 6.5L6.5 12L12 6.5" stroke="#cccccc" stroke-width="1.2" fill="none"/></svg>
<svg style="position:absolute;left:1189px;top:56px" width="16" height="10" viewBox="0 0 16 10"><path d="M0 1H12M0 5H15.5M0 9H10" stroke="#e0e0e0" stroke-width="1.3" fill="none"/></svg>
<svg style="position:absolute;left:1216px;top:56.5px" width="10" height="10" viewBox="0 0 10 10"><path d="M0.5 0.5L9.5 9.5M9.5 0.5L0.5 9.5" stroke="#cccccc" stroke-width="1.3" fill="none"/></svg>
<div style="position:absolute;left:817px;top:437px;width:420px;height:35px;background:#161616;border-radius:0 0 5px 5px;box-shadow:0 0 8px 2px rgba(0,0,0,0.36)"></div>
<div style="position:absolute;left:817px;top:438px;width:2px;height:32px;background:#ffffff"></div>
<svg style="position:absolute;left:826px;top:450px" width="7" height="11" viewBox="0 0 7 11"><path d="M0.8 0.6L6 5.5L0.8 10.4" stroke="#c5c5c5" stroke-width="1.2" fill="none"/></svg>
<div style="position:absolute;left:838px;top:442px;width:221px;height:24px;box-sizing:border-box;background:#1a1a1a;border:1px solid #2c2c2c;border-radius:2px"></div>
<div class="tab" style="left:844.5px;top:446.5px;color:#f0f0f0;font-size:12.5px;-webkit-text-stroke:0.2px #f0f0f0">0.03933716,  0.00378418</div>
<div class="tab" style="left:996.5px;top:447px;color:#a8a8a8;font-size:11.5px">Aa</div>
<div class="tab" style="left:1018px;top:446px;color:#a8a8a8;font-size:11.5px">ab</div>
<svg style="position:absolute;left:1016px;top:457px" width="18" height="4" viewBox="0 0 18 4"><path d="M0.7 0V3.3H16.8V0" stroke="#a8a8a8" stroke-width="1.3" fill="none"/></svg>
<div style="position:absolute;left:1040.5px;top:456px;width:4px;height:4px;background:#b0b0b0"></div>
<svg style="position:absolute;left:1045px;top:448px" width="8" height="8" viewBox="0 0 8 8"><path d="M4 0V8M0.5 2L7.5 6M7.5 2L0.5 6" stroke="#b8b8b8" stroke-width="1.3" fill="none"/></svg>
<div class="tab" style="left:1064.5px;top:446.5px;color:#cccccc;font-size:12px;letter-spacing:-0.1px">? of 2</div>
<svg style="position:absolute;left:1141px;top:447px" width="13" height="13" viewBox="0 0 13 13"><path d="M6.5 12.5V1M1 6.5L6.5 1L12 6.5" stroke="#cccccc" stroke-width="1.2" fill="none"/></svg>
<svg style="position:absolute;left:1166px;top:447px" width="13" height="13" viewBox="0 0 13 13"><path d="M6.5 0.5V12M1 6.5L6.5 12L12 6.5" stroke="#cccccc" stroke-width="1.2" fill="none"/></svg>
<svg style="position:absolute;left:1189px;top:449px" width="16" height="10" viewBox="0 0 16 10"><path d="M0 1H12M0 5H15.5M0 9H10" stroke="#e0e0e0" stroke-width="1.3" fill="none"/></svg>
<svg style="position:absolute;left:1216px;top:449.5px" width="10" height="10" viewBox="0 0 10 10"><path d="M0.5 0.5L9.5 9.5M9.5 0.5L0.5 9.5" stroke="#cccccc" stroke-width="1.3" fill="none"/></svg>
<div style="position:absolute;left:605px;top:48px;width:13px;height:2px;background:#d8d8d8"></div>
<svg style="position:absolute;left:0;top:0" width="1249" height="714" viewBox="0 0 1249 714"><path d="M473.7 11L473.3 34.5" stroke="#ff1a0f" stroke-width="3.2" fill="none"/><path d="M811.5 18L820 18Q823.5 19.5 823.5 23Q823 26.5 820.5 28L808.5 34.5L830 34.5" stroke="#ff1a0f" stroke-width="3" fill="none" stroke-linejoin="round"/><path d="M529 415.5L550 415.5Q552.5 417.5 550.5 420.5L536 430.5L550 431Q552.5 433 550 435.5L536 442" stroke="#ff1a0f" stroke-width="3" fill="none" stroke-linejoin="round"/></svg>
</body></html>
